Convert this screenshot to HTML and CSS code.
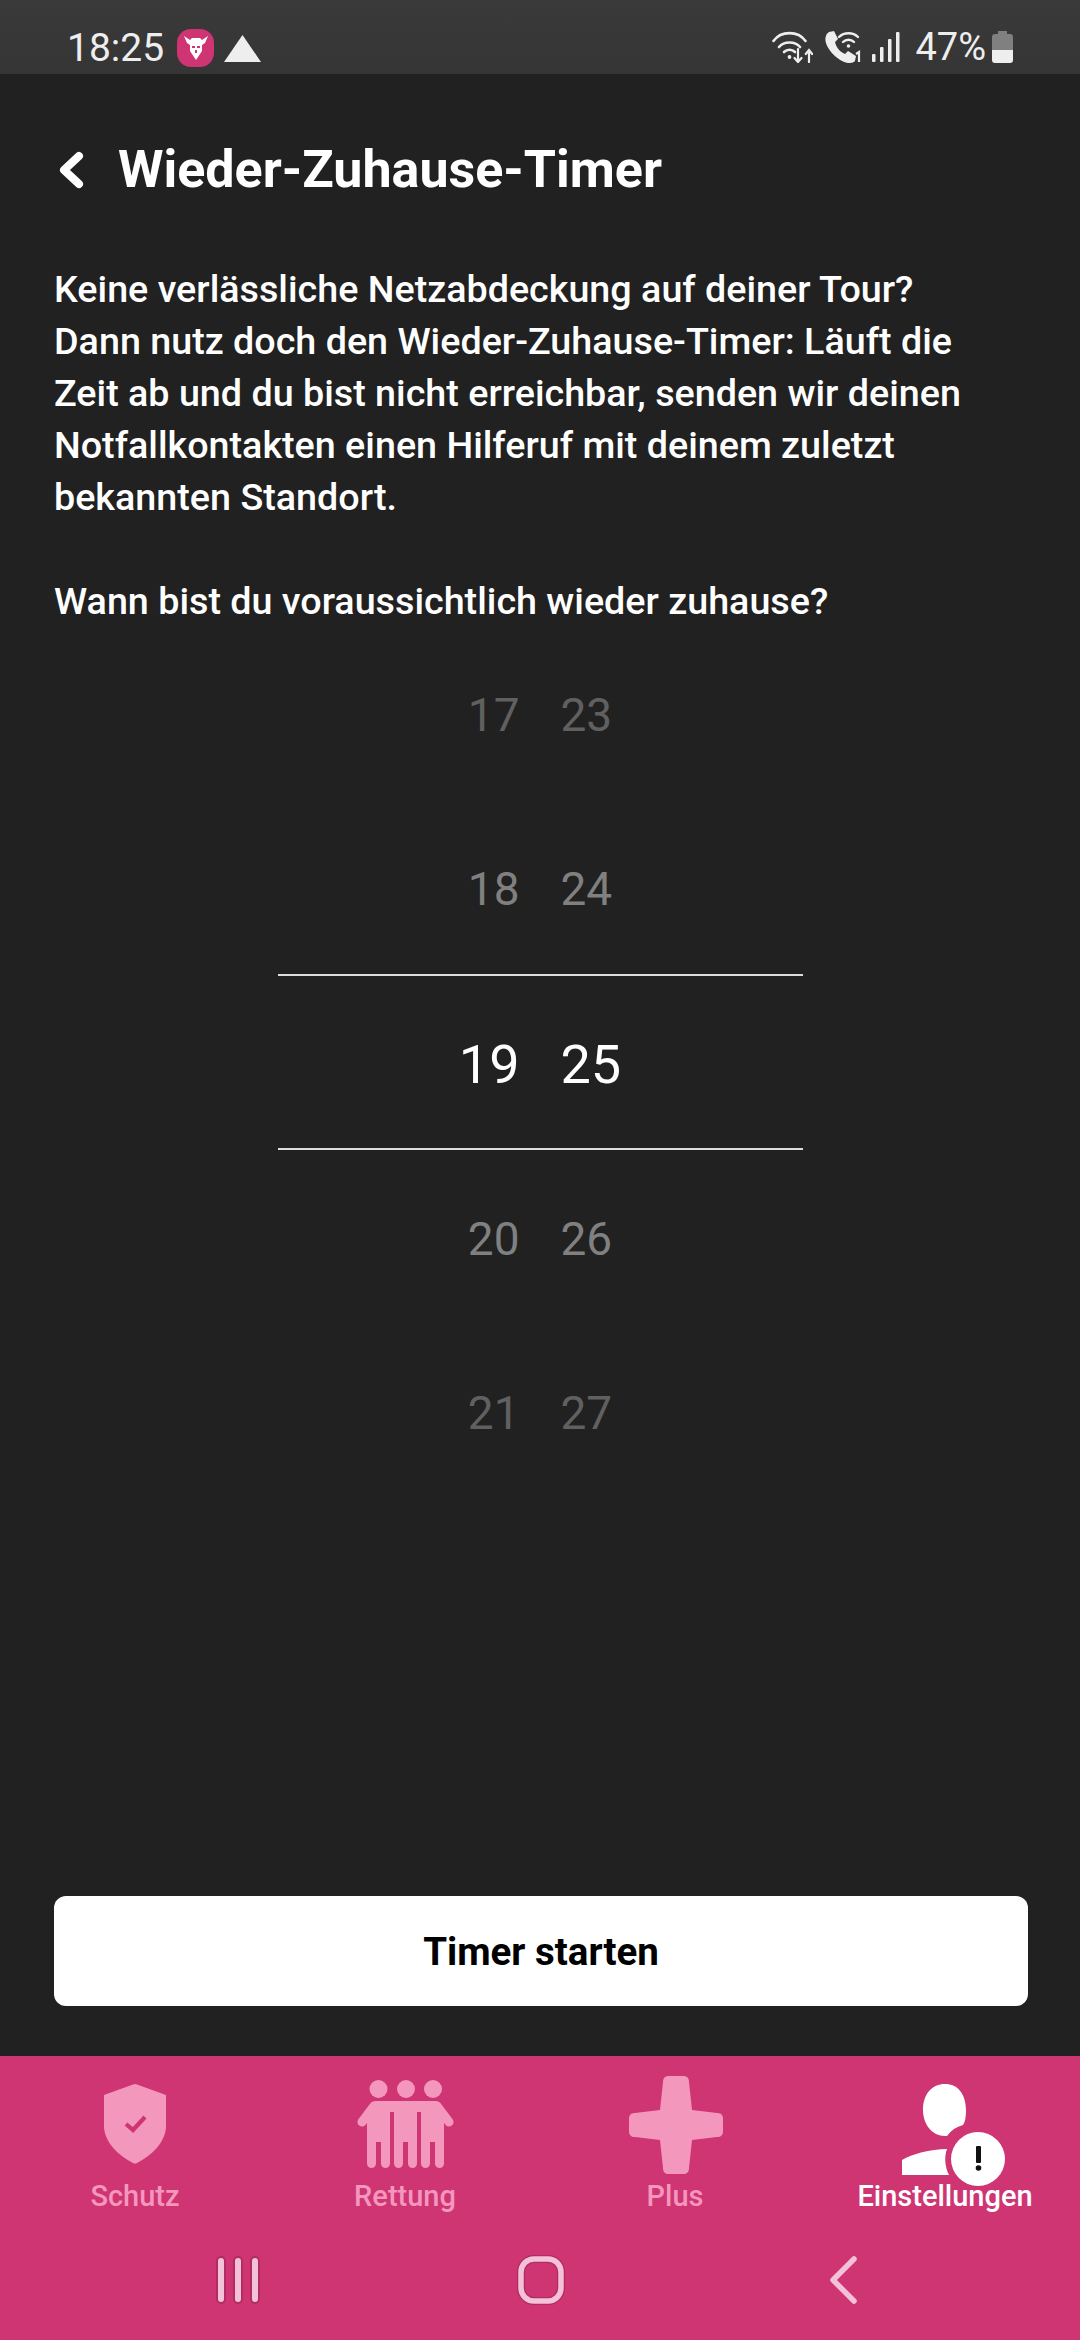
FILE: index.html
```html
<!DOCTYPE html>
<html lang="de">
<head>
<meta charset="utf-8">
<title>Wieder-Zuhause-Timer</title>
<link rel="stylesheet" href="styles.css">
</head>
<body>
<div class="screen">
  <div class="status">
    <div class="status-left">
      <span class="time">18:25</span>
      <span class="app-icon">
        <svg width="24" height="24" viewBox="0 0 24 24"><path fill="#fff" d="M0 0l6 4 2-2h8l2 2 6-4-3 7-3 2v6l-2 3-4 6-4-6-2-3V9L3 7z"/><path fill="#cf3473" d="M8 10h3v2H8zM13 10h3v2h-3zM11 14h2v3h-2z"/></svg>
      </span>
      <svg class="triangle" width="37" height="27" viewBox="0 0 37 27"><path fill="#eee" d="M18.5 0L37 27H0z"/></svg>
    </div>
    <div class="status-right">
      <svg width="41" height="32" viewBox="0 0 41 32" fill="none" stroke="#eee" stroke-width="2.6" stroke-linecap="round">
        <path d="M1.500 10C9-.5 26-.5 33.500 10"/><path d="M7 16c5-6 16-6 21 0"/><path d="M12 21c3-3 8-3 11 0"/>
        <circle cx="17.500" cy="26" r="1.900" fill="#eee" stroke="none"/>
        <path d="M26 18v13M22.500 27l3.500 4 3.500-4M37 31V19M33.800 23l3.200-4 3.200 4" stroke-width="2.200"/>
      </svg>
      <svg class="call" width="37" height="32" viewBox="0 0 37 32" fill="none">
        <path fill="#eee" d="M4 1l5-1 4 8-3 3c1 5 5 10 10 12l3-3 8 5-1 5c-1 1-3 2-5 2C13 32-3 14 1 5c0-2 2-3 3-4z"/>
        <g stroke="#eee" stroke-width="2.400" stroke-linecap="round"><path d="M14 6c5-5 14-5 19 0"/><path d="M18 11c3-3 8-3 11 0"/></g>
        <circle cx="23.500" cy="15" r="1.800" fill="#eee"/>
        <path d="M31 23l3-2v10" stroke="#eee" stroke-width="2.200"/>
      </svg>
      <svg class="signal" width="28" height="30" viewBox="0 0 28 30"><rect x="0" y="22" width="3.500" height="8" rx="1" fill="#eee"/><rect x="8" y="15" width="3.500" height="15" rx="1" fill="#eee"/><rect x="16" y="7" width="3.500" height="23" rx="1" fill="#eee"/><rect x="24" y="0" width="3.500" height="30" rx="1" fill="#eee"/></svg>
      <span class="percent">47%</span>
      <svg class="battery" width="21" height="32" viewBox="0 0 21 32"><path fill="#808080" d="M6 0h9v3h3a3 3 0 0 1 3 3v13H0V6a3 3 0 0 1 3-3h3z"/><path fill="#eee" d="M0 19h21v10a3 3 0 0 1-3 3H3a3 3 0 0 1-3-3z"/></svg>
    </div>
  </div>

  <main class="content">
    <header class="title-bar">
      <svg class="back" width="26" height="38" viewBox="0 0 26 38" fill="none"><path d="M21 5L6 19l15 14" stroke="#fff" stroke-width="8" stroke-linecap="round" stroke-linejoin="round"/></svg>
      <h1 class="title">Wieder-Zuhause-Timer</h1>
    </header>
    <p class="copy intro">Keine verlässliche Netzabdeckung auf deiner Tour?<br>Dann nutz doch den Wieder-Zuhause-Timer: Läuft die<br>Zeit ab und du bist nicht erreichbar, senden wir deinen<br>Notfallkontakten einen Hilferuf mit deinem zuletzt<br>bekannten Standort.</p>
    <p class="copy question">Wann bist du voraussichtlich wieder zuhause?</p>

    <div class="picker">
      <div class="row dim-2"><span>17</span><span>23</span></div>
      <div class="row dim-1"><span>18</span><span>24</span></div>
      <div class="row selected"><span>19</span><span>25</span></div>
      <div class="row dim-1"><span>20</span><span>26</span></div>
      <div class="row dim-2"><span>21</span><span>27</span></div>
    </div>

    <button class="start" type="button">Timer starten</button>
  </main>

  <nav class="tabs">
    <div class="tab">
      <div class="icon-box icon-schutz">
        <svg width="62" height="80" viewBox="0 0 62 80"><path fill="#f497bc" d="M29 .5a5 5 0 0 1 4 0L62 11v31c0 16-15 30-29 37a4 4 0 0 1-4 0C15 72 0 58 0 42V11z"/><path d="M22 40l7 6 12-13" fill="none" stroke="#cf3473" stroke-width="4.200"/></svg>
      </div>
      <span class="tab-label">Schutz</span>
    </div>
    <div class="tab">
      <div class="icon-box icon-rettung">
        <svg width="97" height="88" viewBox="0 0 97 88" fill="#f497bc">
          <circle cx="21.500" cy="9" r="9"/><circle cx="49" cy="9" r="9"/><circle cx="76" cy="9" r="9"/>
          <rect x="14" y="21" width="69" height="11" rx="5"/>
          <rect x="10" y="28" width="23" height="34"/><rect x="37" y="28" width="23" height="34"/><rect x="64" y="28" width="23" height="34"/>
          <rect x="10" y="50" width="9" height="38" rx="4.500"/><rect x="24" y="50" width="9" height="38" rx="4.500"/>
          <rect x="37" y="50" width="9" height="38" rx="4.500"/><rect x="51" y="50" width="9" height="38" rx="4.500"/>
          <rect x="64" y="50" width="9" height="38" rx="4.500"/><rect x="78" y="50" width="9" height="38" rx="4.500"/>
          <path d="M17 26L5 42M80 26l12 16" stroke="#f497bc" stroke-width="9" stroke-linecap="round"/>
        </svg>
      </div>
      <span class="tab-label">Rettung</span>
    </div>
    <div class="tab">
      <div class="icon-box icon-plus">
        <svg width="94" height="98" viewBox="0 0 94 98"><path fill="#f497bc" d="M40 0h14c4 0 6 2 6 6l3 28 25 3c4 0 6 2 6 6v12c0 4-2 6-6 6l-25 3-3 28c0 4-2 6-6 6H40c-4 0-6-2-6-6l-3-28-25-3c-4 0-6-2-6-6V43c0-4 2-6 6-6l25-3 3-28c0-4 2-6 6-6z"/></svg>
      </div>
      <span class="tab-label">Plus</span>
    </div>
    <div class="tab active">
      <div class="icon-box icon-person">
        <svg width="103" height="102" viewBox="0 0 103 102">
          <path fill="#fff" d="M43 0c13 0 21 10 21 27 0 6-1 11-3 14a28 28 0 0 0-16 11h-2C30 52 21 40 21 26 21 10 30 0 43 0z"/>
          <path fill="#fff" d="M0 76c10-6 28-11 45-11-3 8-2 18 2 26H0z"/>
          <circle cx="76" cy="75" r="27" fill="#fff"/>
          <rect x="74" y="62" width="5" height="17" rx="1" fill="#111"/>
          <circle cx="76.500" cy="84" r="2.800" fill="#111"/>
        </svg>
      </div>
      <span class="tab-label">Einstellungen</span>
    </div>
  </nav>

  <div class="sysnav">
    <svg width="45" height="50" viewBox="0 0 45 50"><g fill="#f4c2d8" stroke="#b02c63" stroke-width="2"><rect x="2" y="2" width="8" height="46" rx="4"/><rect x="19" y="2" width="8" height="46" rx="4"/><rect x="36" y="2" width="8" height="46" rx="4"/></g></svg>
    <svg width="48" height="50" viewBox="0 0 48 50"><rect x="4" y="4" width="40" height="42" rx="13" fill="none" stroke="#b02c63" stroke-width="8"/><rect x="4" y="4" width="40" height="42" rx="13" fill="none" stroke="#f4c2d8" stroke-width="5.500"/></svg>
    <svg width="30" height="50" viewBox="0 0 30 50"><path d="M25 4L4 25l21 21" fill="none" stroke="#f4c2d8" stroke-width="5.500" stroke-linecap="round" stroke-linejoin="round"/></svg>
  </div>
</div>
</body>
</html>
```

FILE: styles.css
```css
* { box-sizing: border-box; }
html, body { margin: 0; padding: 0; background: #212121; }
.screen {
  width: 1080px;
  height: 2340px;
  display: flex;
  flex-direction: column;
  font-family: Roboto, sans-serif;
  color: #fff;
  background: #212121;
  overflow: hidden;
}
.status {
  height: 74px;
  flex: none;
  display: flex;
  justify-content: space-between;
  align-items: center;
  padding: 0 67px 0 67px;
  background: linear-gradient(#3a3a3a, #353535);
  color: #eee;
}
.status-left, .status-right { display: flex; align-items: center; }
.status-left { padding-top: 22px; }
.status-right { padding-top: 20px; }
.time { font-size: 39px; line-height: 44px; width: 110px; }
.app-icon {
  width: 37px;
  height: 38px;
  border-radius: 14px;
  background: #cf3473;
  display: flex;
  align-items: center;
  justify-content: center;
}
.triangle { margin-left: 10px; }
.call { margin-left: 12px; }
.signal { margin-left: 10px; }
.percent { font-size: 38px; line-height: 44px; margin-left: 15px; }
.battery { margin-left: 6px; }

.content {
  flex: 1;
  display: flex;
  flex-direction: column;
  padding: 0 52px 0 54px;
}
.title-bar {
  display: flex;
  align-items: center;
  gap: 34px;
  height: 64px;
  margin-top: 64px;
  padding-left: 4px;
}
.back { flex: none; }
.title { margin: 0; font-size: 52px; line-height: 64px; font-weight: 700; }
.copy {
  margin: 0;
  font-size: 37.700px;
  line-height: 52px;
  font-weight: 500;
}
.intro { margin-top: 61px; }
.question { margin-top: 52px; }

.picker {
  width: 525px;
  align-self: center;
  margin: -1px 0 0 -2px;
}
.row {
  height: 174px;
  display: grid;
  grid-template-columns: 1fr 1fr;
  column-gap: 41px;
  align-items: center;
  font-size: 46px;
  padding-top: 4px;
}
.row span:first-child { text-align: right; }
.dim-1 { color: #808080; }
.dim-2 { color: #606060; }
.row.selected {
  height: 176px;
  color: #fff;
  font-size: 54px;
  border-top: 2px solid #ddd;
  border-bottom: 2px solid #ddd;
}
.start {
  margin-top: auto;
  margin-bottom: 50px;
  height: 110px;
  width: 974px;
  border: 0;
  border-radius: 12px;
  background: #fff;
  color: #000;
  font-family: Roboto, sans-serif;
  font-size: 38.500px;
  font-weight: 700;
}

.tabs {
  flex: none;
  height: 172px;
  display: grid;
  grid-template-columns: repeat(4, 1fr);
  background: #cf3473;
}
.tab {
  display: flex;
  flex-direction: column;
  align-items: center;
  color: #f497bc;
}
.icon-box {
  height: 122px;
  width: 100%;
  display: flex;
  justify-content: center;
  align-items: flex-start;
}
.icon-schutz { padding-top: 28px; }
.icon-rettung { padding-top: 24px; }
.icon-plus { padding-top: 20px; padding-left: 2px; }
.icon-person { padding-top: 28px; padding-left: 17px; }
.tab-label { font-size: 29px; line-height: 36px; font-weight: 500; }
.active { color: #fff; }
.sysnav {
  flex: none;
  height: 112px;
  background: #cf3473;
  display: grid;
  grid-template-columns: repeat(3, 303px);
  justify-items: center;
  align-items: start;
  padding: 27px 0 0 86px;
}
```
